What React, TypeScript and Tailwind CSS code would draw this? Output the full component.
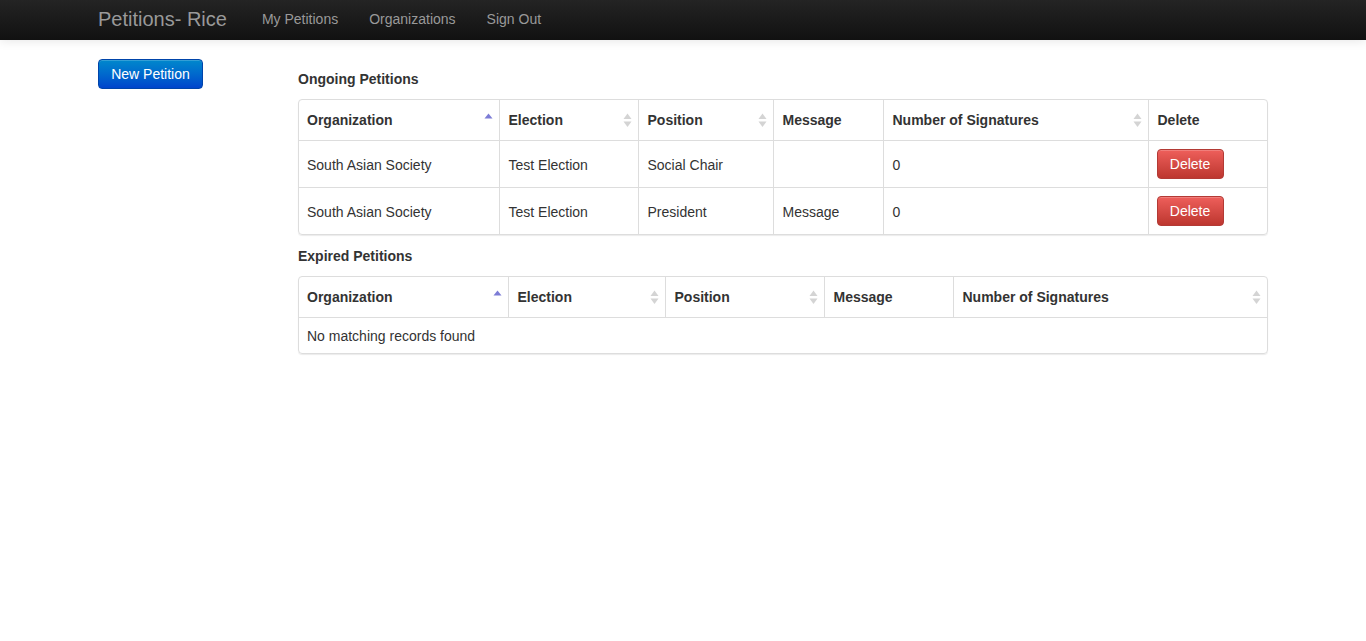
const ongoing = [
  { org: "South Asian Society", election: "Test Election", position: "Social Chair", message: "", signatures: 0 },
  { org: "South Asian Society", election: "Test Election", position: "President", message: "Message", signatures: 0 },
];

function SortIcon({ active }: { active?: boolean }) {
  if (active) {
    return (
      <svg width="9" height="6" viewBox="0 0 9 6" className="absolute right-[6px] top-[13px]">
        <path d="M0.5 5.5 L4.5 0.5 L8.5 5.5 Z" fill="#7c7cd6" />
      </svg>
    );
  }
  return (
    <svg width="9" height="15" viewBox="0 0 9 15" className="absolute right-[6px] top-[13px]">
      <path d="M0.5 6 L4.5 0.5 L8.5 6 Z" fill="#d4d4d4" />
      <path d="M0.5 8.5 L4.5 14 L8.5 8.5 Z" fill="#d4d4d4" />
    </svg>
  );
}

type Col = { label: string; width: number; sort?: "asc" | "both" };

function Th({ col, first, last }: { col: Col; first?: boolean; last?: boolean }) {
  return (
    <th
      style={{ width: col.width }}
      className={`relative h-[40px] pr-[8px] text-left align-middle font-bold text-[#333] border-b border-[#ddd] ${first ? "pl-[8px]" : "pl-[9px]"} ${last ? "" : "border-r"}`}
    >
      {col.label}
      {col.sort === "asc" && <SortIcon active />}
      {col.sort === "both" && <SortIcon />}
    </th>
  );
}

function DeleteButton() {
  return (
    <button className="h-[30px] w-[67px] rounded-[4px] border border-[#b33a35] bg-gradient-to-b from-[#ee5f5b] to-[#bd362f] text-white text-[14px] shadow-[inset_0_1px_0_rgba(255,255,255,0.2)]">
      Delete
    </button>
  );
}

const ongoingCols: Col[] = [
  { label: "Organization", width: 200, sort: "asc" },
  { label: "Election", width: 139, sort: "both" },
  { label: "Position", width: 135, sort: "both" },
  { label: "Message", width: 110 },
  { label: "Number of Signatures", width: 265, sort: "both" },
  { label: "Delete", width: 119 },
];

const expiredCols: Col[] = [
  { label: "Organization", width: 209, sort: "asc" },
  { label: "Election", width: 157, sort: "both" },
  { label: "Position", width: 159, sort: "both" },
  { label: "Message", width: 129 },
  { label: "Number of Signatures", width: 314, sort: "both" },
];

export default function App() {
  return (
    <div className="min-h-[641px] bg-white text-[14px] leading-[20px] text-[#333]" style={{ fontFamily: '"Liberation Sans", Arial, sans-serif' }}>
      <div className="h-[40px] bg-gradient-to-b from-[#242424] to-[#111] shadow-[0_1px_10px_rgba(0,0,0,0.1)]">
        <div className="mx-auto flex h-full w-[1170px] items-center pb-[2px]">
          <span className="text-[20px] text-[#999]">Petitions- Rice</span>
          <nav className="ml-[20px] flex">
            <a className="pl-[15px] pr-[16px] text-[#999]">My Petitions</a>
            <a className="pl-[15px] pr-[16px] text-[#999]">Organizations</a>
            <a className="px-[15px] text-[#999]">Sign Out</a>
          </nav>
        </div>
      </div>

      <div className="mx-auto flex w-[1170px] pt-[19px]">
        <div className="mr-[30px] w-[170px]">
          <button className="h-[30px] w-[105px] rounded-[4px] border border-[#0044aa] bg-gradient-to-b from-[#0088cc] to-[#0044cc] text-[14px] text-white shadow-[inset_0_1px_0_rgba(255,255,255,0.2)]">
            New Petition
          </button>
        </div>

        <div className="w-[970px] pt-[10px]">
          <h4 className="mb-[10px] font-bold">Ongoing Petitions</h4>
          <div className="overflow-hidden rounded-[4px] border border-[#ddd] shadow-[0_1px_1px_rgba(0,0,0,0.08)]">
            <table className="w-full table-fixed border-collapse">
              <thead>
                <tr>
                  {ongoingCols.map((c, i) => (
                    <Th key={c.label} col={c} first={i === 0} last={i === ongoingCols.length - 1} />
                  ))}
                </tr>
              </thead>
              <tbody>
                {ongoing.map((row, r) => (
                  <tr key={r} className={r < ongoing.length - 1 ? "border-b border-[#ddd]" : ""}>
                    <td className="h-[47px] border-r border-[#ddd] px-[8px] pt-[2px]">{row.org}</td>
                    <td className="border-r border-[#ddd] pl-[9px] pr-[8px] pt-[2px]">{row.election}</td>
                    <td className="border-r border-[#ddd] pl-[9px] pr-[8px] pt-[2px]">{row.position}</td>
                    <td className="border-r border-[#ddd] pl-[9px] pr-[8px] pt-[2px]">{row.message}</td>
                    <td className="border-r border-[#ddd] pl-[9px] pr-[8px] pt-[2px]">{row.signatures}</td>
                    <td className="px-[8px]">
                      <DeleteButton />
                    </td>
                  </tr>
                ))}
              </tbody>
            </table>
          </div>

          <h4 className="mb-[10px] mt-[11px] font-bold">Expired Petitions</h4>
          <div className="overflow-hidden rounded-[4px] border border-[#ddd] shadow-[0_1px_1px_rgba(0,0,0,0.08)]">
            <table className="w-full table-fixed border-collapse">
              <thead>
                <tr>
                  {expiredCols.map((c, i) => (
                    <Th key={c.label} col={c} first={i === 0} last={i === expiredCols.length - 1} />
                  ))}
                </tr>
              </thead>
              <tbody>
                <tr>
                  <td colSpan={5} className="h-[36px] px-[8px] pt-[2px]">
                    No matching records found
                  </td>
                </tr>
              </tbody>
            </table>
          </div>
        </div>
      </div>
    </div>
  );
}
